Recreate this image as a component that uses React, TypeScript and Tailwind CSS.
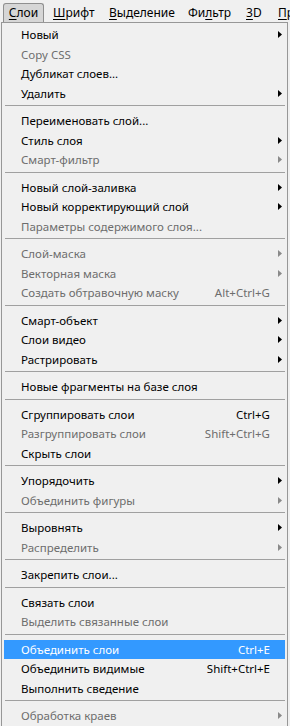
type Item = {
  label: string;
  disabled?: boolean;
  sub?: boolean;
  shortcut?: string;
  active?: boolean;
};

const groups: Item[][] = [
  [
    { label: "Новый", sub: true },
    { label: "Copy CSS", disabled: true },
    { label: "Дубликат слоев..." },
    { label: "Удалить", sub: true },
  ],
  [
    { label: "Переименовать слой..." },
    { label: "Стиль слоя", sub: true },
    { label: "Смарт-фильтр", disabled: true, sub: true },
  ],
  [
    { label: "Новый слой-заливка", sub: true },
    { label: "Новый корректирующий слой", sub: true },
    { label: "Параметры содержимого слоя...", disabled: true },
  ],
  [
    { label: "Слой-маска", disabled: true, sub: true },
    { label: "Векторная маска", disabled: true, sub: true },
    { label: "Создать обтравочную маску", disabled: true, shortcut: "Alt+Ctrl+G" },
  ],
  [
    { label: "Смарт-объект", sub: true },
    { label: "Слои видео", sub: true },
    { label: "Растрировать", sub: true },
  ],
  [{ label: "Новые фрагменты на базе слоя" }],
  [
    { label: "Сгруппировать слои", shortcut: "Ctrl+G" },
    { label: "Разгруппировать слои", disabled: true, shortcut: "Shift+Ctrl+G" },
    { label: "Скрыть слои" },
  ],
  [
    { label: "Упорядочить", sub: true },
    { label: "Объединить фигуры", disabled: true, sub: true },
  ],
  [
    { label: "Выровнять", sub: true },
    { label: "Распределить", disabled: true, sub: true },
  ],
  [{ label: "Закрепить слои..." }],
  [
    { label: "Связать слои" },
    { label: "Выделить связанные слои", disabled: true },
  ],
  [
    { label: "Объединить слои", shortcut: "Ctrl+E", active: true },
    { label: "Объединить видимые", shortcut: "Shift+Ctrl+E" },
    { label: "Выполнить сведение" },
  ],
  [{ label: "Обработка краев", disabled: true, sub: true }],
];

function Arrow({ color }: { color: string }) {
  return (
    <svg width="4" height="7" viewBox="0 0 4 7" className="absolute left-[274px] top-[6px]">
      <polygon points="0,0 4,3.5 0,7" fill={color} />
    </svg>
  );
}

function Row({ item }: { item: Item }) {
  const color = item.active ? "text-white" : item.disabled ? "text-[#6d6d6d]" : "text-black";
  return (
    <div className={`relative flex h-[19.5px] items-center ${item.active ? "bg-[#3399ff]" : ""}`}>
      <span className={`pl-[17px] ${color}`}>{item.label}</span>
      {item.shortcut && (
        <span className={`absolute right-[15px] ${color}`}>{item.shortcut}</span>
      )}
      {item.sub && <Arrow color={item.disabled ? "#8a8a8a" : "#000"} />}
    </div>
  );
}

function BarItem({ pre, u, post }: { pre?: string; u: string; post: string }) {
  return (
    <span className="whitespace-nowrap">
      {pre}
      <span className="underline underline-offset-2">{u}</span>
      {post}
    </span>
  );
}

export default function App() {
  return (
    <div
      className="h-[726px] w-[290px] overflow-hidden bg-[#f0f0f0] text-[11.5px] leading-none text-black"
      style={{ fontFamily: '"Noto Sans", "Open Sans", sans-serif' }}
    >
      <div className="flex h-[22px] items-end text-[12px]">
        <div className="ml-[3px] flex h-[19px] w-[41px] shrink-0 items-center justify-center rounded-t-[3px] border border-b-0 border-[#8f8f8f] bg-[#d6d6d6]">
          <BarItem u="С" post="лои" />
        </div>
        <div className="flex h-[19px] items-center">
          <span className="ml-[9px] w-[56px] shrink-0"><BarItem u="Ш" post="рифт" /></span>
          <span className="w-[79px] shrink-0"><BarItem u="В" post="ыделение" /></span>
          <span className="w-[58px] shrink-0"><BarItem pre="Фи" u="л" post="ьтр" /></span>
          <span className="w-[32px] shrink-0"><BarItem u="3" post="D" /></span>
          <span className="shrink-0"><BarItem u="П" post="р" /></span>
        </div>
      </div>
      <div className="ml-px h-[704px] w-[287px] border-l border-r border-t border-[#979797] bg-[#f0f0f0] px-[2px] pt-[2px]">
        {groups.map((g, gi) => (
          <div key={gi}>
            {gi > 0 && (
              <div className="h-[8px] pt-[2px]">
                <div className="ml-px h-px bg-[#a0a0a0]" />
              </div>
            )}
            {g.map((item) => (
              <Row key={item.label} item={item} />
            ))}
          </div>
        ))}
      </div>
    </div>
  );
}
